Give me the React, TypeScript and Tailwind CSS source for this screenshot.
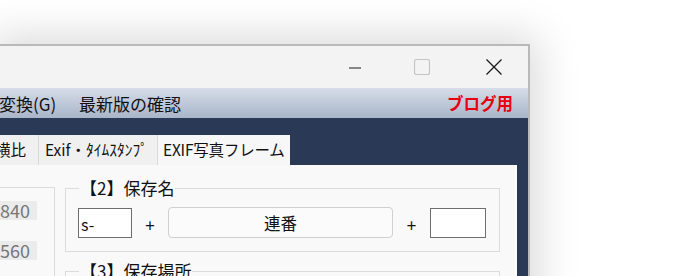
import React from "react";

function Minimize() {
  return (
    <svg width="12" height="2" viewBox="0 0 12 2">
      <line x1="0" y1="1" x2="12" y2="1" stroke="#1a1a1a" strokeWidth="1" />
    </svg>
  );
}
function Maximize() {
  return (
    <svg width="16" height="16" viewBox="0 0 16 16">
      <rect x="0.5" y="0.5" width="15" height="15" rx="2" fill="none" stroke="#c4c4c4" strokeWidth="1.2" />
    </svg>
  );
}
function Close() {
  return (
    <svg width="16" height="16" viewBox="0 0 16 16">
      <path d="M0.5 0.5 L15.5 15.5 M15.5 0.5 L0.5 15.5" stroke="#1a1a1a" strokeWidth="1.3" />
    </svg>
  );
}

export default function App() {
  return (
    <div className="w-[680px] h-[276px] bg-white overflow-hidden font-['Noto_Sans_CJK_JP',sans-serif] text-[#111]">
      <div className="mt-[44px] w-[530px] h-[300px] border-t-2 border-r-2 border-[#b9b9b9] shadow-[0_0_40px_8px_rgba(0,0,0,0.15)] flex flex-col">
        {/* title bar */}
        <div className="h-[42px] bg-[#f3f3f3] flex justify-end items-center shrink-0">
          <div className="w-[58px] flex justify-center pt-[2px]">
            <Minimize />
          </div>
          <div className="w-[76px] flex justify-center">
            <Maximize />
          </div>
          <div className="w-[68px] flex justify-center">
            <Close />
          </div>
        </div>
        {/* menu bar */}
        <div className="h-[30px] shrink-0 bg-gradient-to-b from-[#d6dde8] to-[#a9b5c9] flex items-center text-[17px] leading-none">
          <div className="w-[80px] -ml-[1px]">変換(G)</div>
          <div>最新版の確認</div>
          <div className="flex-1" />
          <div className="text-[#e60012] font-bold text-[16.5px] pr-[15px]">ブログ用</div>
        </div>
        {/* dark area */}
        <div className="flex-1 bg-[#293956] pt-[17px] pr-[11px] flex flex-col">
          <div className="h-[30px] flex text-[15.5px] leading-none">
            <div className="w-[39px] bg-[#f0f0f0] border-r border-[#d9d9d9] flex items-center justify-end pr-[12px] overflow-hidden whitespace-nowrap">
              横比
            </div>
            <div className="w-[119px] bg-[#f0f0f0] border-r border-[#d9d9d9] flex items-center pl-[6px] whitespace-nowrap">
              Exif・ﾀｲﾑｽﾀﾝﾌﾟ
            </div>
            <div className="w-[132px] bg-[#f7f7f7] flex items-center pl-[5px] whitespace-nowrap tracking-[-0.2px]">
              EXIF写真フレーム
            </div>
          </div>
          {/* panel */}
          <div className="flex-1 bg-[#f9f9f9] border-r-2 border-white pt-[14px] flex">
            {/* left cut-off group */}
            <div className="w-[55px] mt-[8px] h-[120px] border-t border-r border-[#dcdcdc] pt-[13px] flex flex-col gap-[21px]">
              <div className="w-[37px] h-[19px] bg-[#ebebeb] text-[#777] text-[18px] leading-[19px] text-right pr-[10px]">840</div>
              <div className="w-[37px] h-[19px] bg-[#ebebeb] text-[#777] text-[18px] leading-[19px] text-right pr-[10px]">560</div>
            </div>
            <div className="ml-[10px] w-[435px] flex flex-col gap-[10px]">
              <fieldset className="border border-[#dcdcdc] h-[73px] pl-[12px]">
                <legend className="ml-[1px] px-[1px] text-[17px] leading-[18px]">【2】保存名</legend>
                <div className="flex items-center mt-[10px]">
                  <div className="w-[54px] h-[30px] border border-[#6e6e6e] bg-white text-[16px] leading-[28px] pl-[2px] pt-[1px]">s-</div>
                  <div className="w-[36px] text-center text-[17px] pt-[5px]">+</div>
                  <div className="w-[225px] h-[31px] rounded-[4px] border border-[#d0d0d0] bg-[#fbfbfb] flex items-center justify-center text-[16.5px] pt-[1px]">連番</div>
                  <div className="w-[37px] text-center text-[17px] pt-[5px]">+</div>
                  <div className="w-[56px] h-[30px] border border-[#6e6e6e] bg-white" />
                </div>
              </fieldset>
              <fieldset className="border border-[#dcdcdc] h-[60px] pl-[12px]">
                <legend className="ml-[1px] px-[1px] text-[17px] leading-[18px]">【3】保存場所</legend>
              </fieldset>
            </div>
          </div>
        </div>
      </div>
    </div>
  );
}
